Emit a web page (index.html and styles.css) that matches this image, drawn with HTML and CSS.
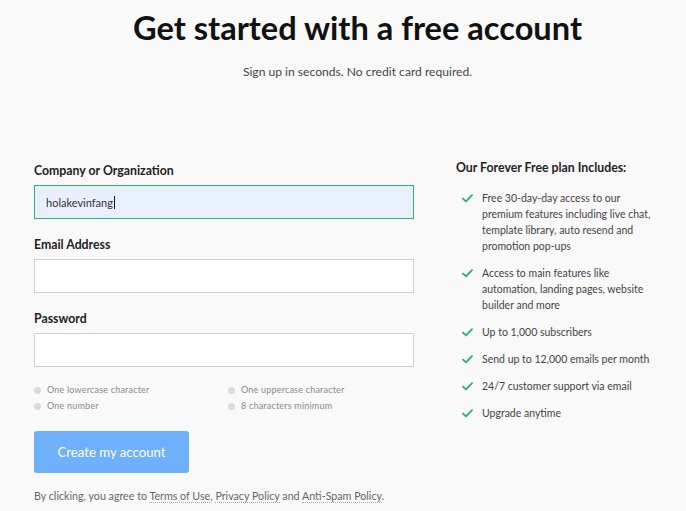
FILE: index.html
```html
<!DOCTYPE html>
<html lang="en">
<head>
<meta charset="utf-8">
<title>Get started with a free account</title>
<link rel="stylesheet" href="styles.css">
</head>
<body>
<header class="hero">
  <h1 class="hero-title">Get started with a free account</h1>
  <p class="hero-sub">Sign up in seconds. No credit card required.</p>
</header>
<main class="signup">
  <form class="signup-form">
    <label class="field-label" for="org">Company or Organization</label>
    <div class="input input-active" id="org"><span class="input-value">holakevinfang</span><span class="caret"></span></div>

    <label class="field-label" for="email">Email Address</label>
    <div class="input" id="email"></div>

    <label class="field-label" for="pwd">Password</label>
    <div class="input" id="pwd"></div>

    <ul class="hints">
      <li class="hint">One lowercase character</li>
      <li class="hint">One uppercase character</li>
      <li class="hint">One number</li>
      <li class="hint">8 characters minimum</li>
    </ul>

    <button type="button" class="submit">Create my account</button>

    <p class="legal">By clicking, you agree to <a class="legal-link">Terms of Use</a>, <a class="legal-link">Privacy Policy</a> and <a class="legal-link">Anti-Spam Policy</a>.</p>
  </form>

  <aside class="plan">
    <h2 class="plan-title">Our Forever Free plan Includes:</h2>
    <ul class="plan-list">
      <li class="plan-item"><svg class="check" viewBox="0 0 11 9" width="11" height="9"><path d="M1 4.6 L4 7.4 L10 1.2" fill="none" stroke="#2bb07a" stroke-width="1.9" stroke-linecap="round" stroke-linejoin="round"/></svg><span>Free 30-day-day access to our<br>premium features including live chat,<br>template library, auto resend and<br>promotion pop-ups</span></li>
      <li class="plan-item"><svg class="check" viewBox="0 0 11 9" width="11" height="9"><path d="M1 4.6 L4 7.4 L10 1.2" fill="none" stroke="#2bb07a" stroke-width="1.9" stroke-linecap="round" stroke-linejoin="round"/></svg><span>Access to main features like<br>automation, landing pages, website<br>builder and more</span></li>
      <li class="plan-item"><svg class="check" viewBox="0 0 11 9" width="11" height="9"><path d="M1 4.6 L4 7.4 L10 1.2" fill="none" stroke="#2bb07a" stroke-width="1.9" stroke-linecap="round" stroke-linejoin="round"/></svg><span>Up to 1,000 subscribers</span></li>
      <li class="plan-item"><svg class="check" viewBox="0 0 11 9" width="11" height="9"><path d="M1 4.6 L4 7.4 L10 1.2" fill="none" stroke="#2bb07a" stroke-width="1.9" stroke-linecap="round" stroke-linejoin="round"/></svg><span>Send up to 12,000 emails per month</span></li>
      <li class="plan-item"><svg class="check" viewBox="0 0 11 9" width="11" height="9"><path d="M1 4.6 L4 7.4 L10 1.2" fill="none" stroke="#2bb07a" stroke-width="1.9" stroke-linecap="round" stroke-linejoin="round"/></svg><span>24/7 customer support via email</span></li>
      <li class="plan-item"><svg class="check" viewBox="0 0 11 9" width="11" height="9"><path d="M1 4.6 L4 7.4 L10 1.2" fill="none" stroke="#2bb07a" stroke-width="1.9" stroke-linecap="round" stroke-linejoin="round"/></svg><span>Upgrade anytime</span></li>
    </ul>
  </aside>
</main>
</body>
</html>
```

FILE: styles.css
```css
* { box-sizing: border-box; }

html, body {
  margin: 0;
  padding: 0;
  background: #f9f9f9;
  font-family: "Lato", "Liberation Sans", sans-serif;
  color: #222;
}

.hero {
  text-align: center;
  padding-top: 10px;
  padding-left: 29px;
}

.hero-title {
  margin: 0;
  font-size: 32.6px;
  line-height: 36px;
  font-weight: 700;
  color: #111;
}

.hero-sub {
  margin: 18px 0 0;
  font-size: 12.1px;
  line-height: 16px;
  color: #444;
}

.signup {
  display: flex;
  gap: 42px;
  padding-left: 34px;
  margin-top: 80px;
}

.signup-form {
  width: 380px;
  display: flex;
  flex-direction: column;
  padding-top: 2px;
}

.field-label {
  display: block;
  font-size: 12.3px;
  line-height: 16px;
  padding-top: 1px;
  font-weight: 700;
  color: #222;
  margin-bottom: 6px;
}

.input {
  height: 34px;
  background: #fff;
  border: 1px solid #d0d0d0;
  margin-bottom: 17px;
  display: flex;
  align-items: center;
  padding-left: 11px;
  font-size: 11px;
  color: #333;
}

.input-active {
  background: #e8f0fe;
  border-color: #2fb27b;
}

.caret {
  display: inline-block;
  width: 1px;
  height: 13px;
  background: #111;
  margin-left: 1px;
}

.hints {
  list-style: none;
  margin: -2px 0 0;
  padding: 0;
  display: grid;
  grid-template-columns: 194px 186px;
}

.hint {
  position: relative;
  padding-left: 13px;
  font-size: 9px;
  line-height: 16px;
  color: #8a8a8a;
  letter-spacing: 0.2px;
}

.hint::before {
  content: "";
  position: absolute;
  left: 0;
  top: 5px;
  width: 7px;
  height: 7px;
  border-radius: 50%;
  background: #dcdcdc;
}

.submit {
  margin-top: 17px;
  width: 155px;
  height: 42px;
  border: 0;
  border-radius: 3px;
  background: #6eb0fb;
  color: #fff;
  font-family: inherit;
  font-size: 13.2px;
  padding: 0;
  text-align: center;
}

.legal {
  margin: 15px 0 0;
  font-size: 10.7px;
  line-height: 16px;
  color: #666;
}

.legal-link {
  color: #666;
  text-decoration: none;
  border-bottom: 1px dotted #aaa;
}

.plan {
  width: 220px;
}

.plan-title {
  margin: 0;
  font-size: 12.3px;
  line-height: 16px;
  font-weight: 700;
  color: #222;
}

.plan-list {
  list-style: none;
  margin: 14px 0 0;
  padding: 0;
  display: flex;
  flex-direction: column;
  gap: 11px;
}

.plan-item {
  display: flex;
  align-items: flex-start;
  font-size: 10.5px;
  line-height: 16px;
  color: #444;
}

.check {
  flex: none;
  margin: 4px 9px 0 6px;
}

.plan-item span {
  white-space: nowrap;
}
```
